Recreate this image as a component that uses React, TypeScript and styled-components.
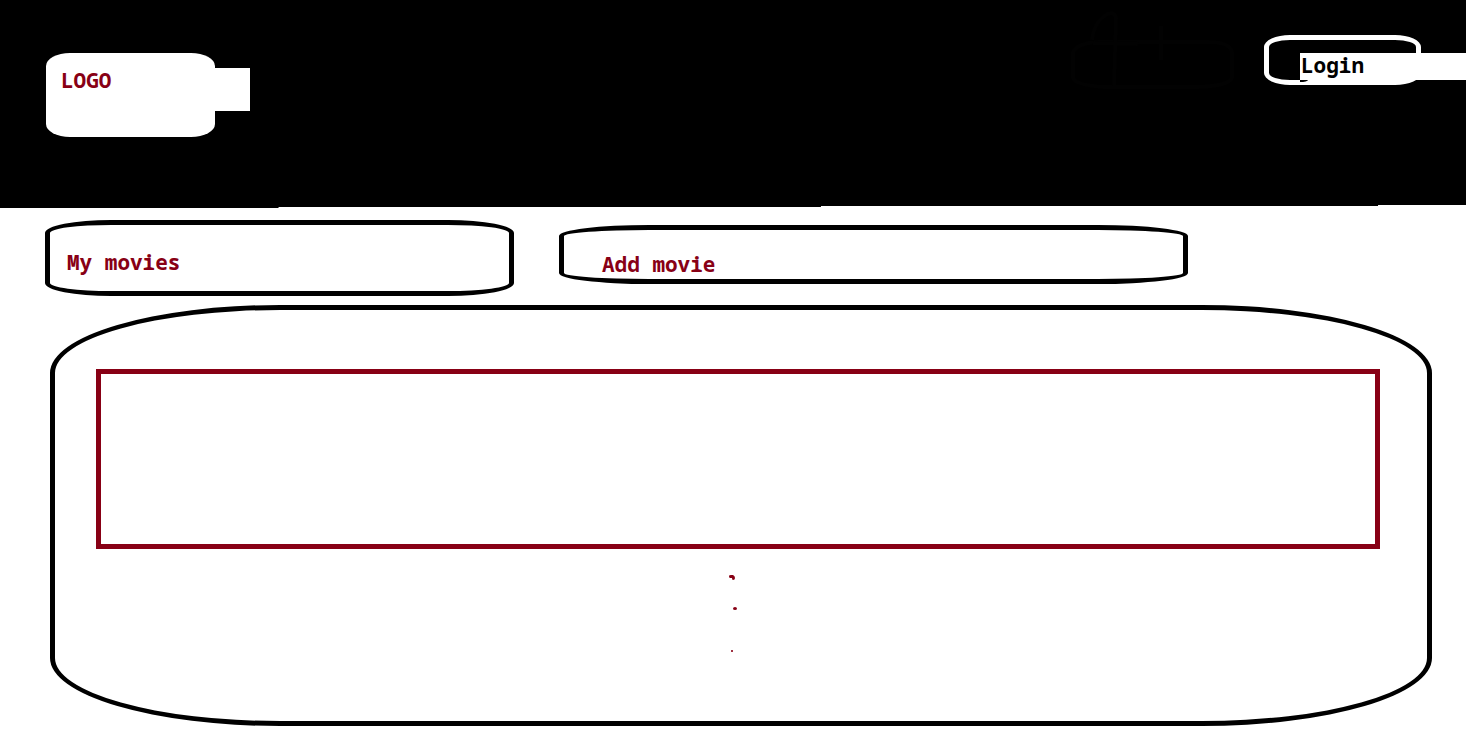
import React from "react";
import styled, { createGlobalStyle } from "styled-components";

const maroon = "#880015";

const GlobalStyle = createGlobalStyle`
  *, *::before, *::after { box-sizing: border-box; }
  body {
    margin: 0;
    background: #fff;
    font-family: "Noto Sans Mono", "DejaVu Sans Mono", monospace;
    font-size: 21px;
    font-weight: 700;
    line-height: 27px;
  }
`;

const Header = styled.header`
  display: flex;
  align-items: flex-start;
  height: 208px;
  padding-left: 46px;
  background: #000;
  clip-path: polygon(
    0 0, 100% 0, 100% 205px, 94% 205px, 94% 206px, 56% 206px,
    56% 207px, 19% 207px, 19% 208px, 0 208px
  );
`;

const Logo = styled.a`
  position: relative;
  width: 169px;
  height: 84px;
  margin-top: 53px;
  margin-right: auto;
  padding: 14px 15px;
  border-radius: 24px / 13px;
  background: #fff;
  color: ${maroon};
  text-decoration: none;

  &::after {
    content: "";
    position: absolute;
    top: 15px;
    left: 100%;
    width: 35px;
    height: 43px;
    background: #fff;
  }
`;

const FaintSketch = styled.svg`
  width: 170px;
  height: 84px;
  margin-top: 10px;
  margin-right: 26px;
`;

const LoginButton = styled.button`
  position: relative;
  width: 157px;
  height: 50px;
  margin-top: 35px;
  margin-right: 45px;
  padding: 0;
  border: 5px solid #fff;
  border-radius: 26px / 12px;
  background: #000;
  color: #000;
  font: inherit;
`;

const LoginLabel = styled.span`
  position: absolute;
  top: 13px;
  left: 31px;
  right: -50px;
  height: 27px;
  padding-left: 1px;
  background: #fff;
  line-height: 25px;
  text-align: left;

  &::after {
    content: "";
    position: absolute;
    top: 100%;
    left: 0;
    width: 8px;
    height: 2px;
    border-bottom-right-radius: 8px 2px;
    background: #000;
  }
`;

const Nav = styled.nav`
  display: grid;
  grid-template-columns: 469fr 629fr 188fr;
  align-items: start;
  gap: 45px;
  padding: 12px 45px 0;
`;

const NavButton = styled.button<{ $wide?: boolean }>`
  height: ${(p) => (p.$wide ? 59 : 76)}px;
  margin-top: ${(p) => (p.$wide ? 5 : 0)}px;
  padding: ${(p) => (p.$wide ? "20px 0 0 38px" : "8px 0 0 17px")};
  border: 5px solid #000;
  border-radius: ${(p) => (p.$wide ? "90px / 11px" : "66px / 13px")};
  background: #fff;
  color: ${maroon};
  font: inherit;
  text-align: left;
`;

const Panel = styled.main`
  margin: 9px 34px 9px 50px;
  height: 421px;
  padding: 59px 47px 0 41px;
  border: 5px solid #000;
  border-radius: 230px / 68px;
`;

const MovieCard = styled.section`
  height: 180px;
  border: 5px solid ${maroon};
`;

const Dots = styled.svg`
  display: block;
  width: 20px;
  height: 90px;
  margin: 20px auto 0;
  fill: ${maroon};
`;

export default function App() {
  return (
    <>
      <GlobalStyle />
      <Header>
        <Logo href="#">LOGO</Logo>
        <FaintSketch viewBox="0 0 170 84" fill="none" stroke="#020202" strokeWidth="4" aria-hidden="true">
          <path d="M5 42Q10 33 30 32H140Q162 32 164 42V68Q160 76 130 77H35Q8 75 5 68Z" />
          <path d="M24 30C26 8 46 -4 48 8L46 76M25 33L70 34M93 16V50" />
        </FaintSketch>
        <LoginButton type="button">
          <LoginLabel>Login</LoginLabel>
        </LoginButton>
      </Header>
      <Nav>
        <NavButton type="button">My movies</NavButton>
        <NavButton type="button" $wide>Add movie</NavButton>
      </Nav>
      <Panel>
        <MovieCard aria-label="Movie" />
        <Dots viewBox="0 0 20 90" aria-hidden="true">
          <path d="M1 7Q1 6 3 6H5Q7 7 7 9Q7 11 5 11Q4 11 4 9H2Q1 9 1 7Z" />
          <ellipse cx="7" cy="39.5" rx="2" ry="1.5" />
          <rect x="3" y="81" width="2" height="2" opacity="0.8" />
        </Dots>
      </Panel>
    </>
  );
}
